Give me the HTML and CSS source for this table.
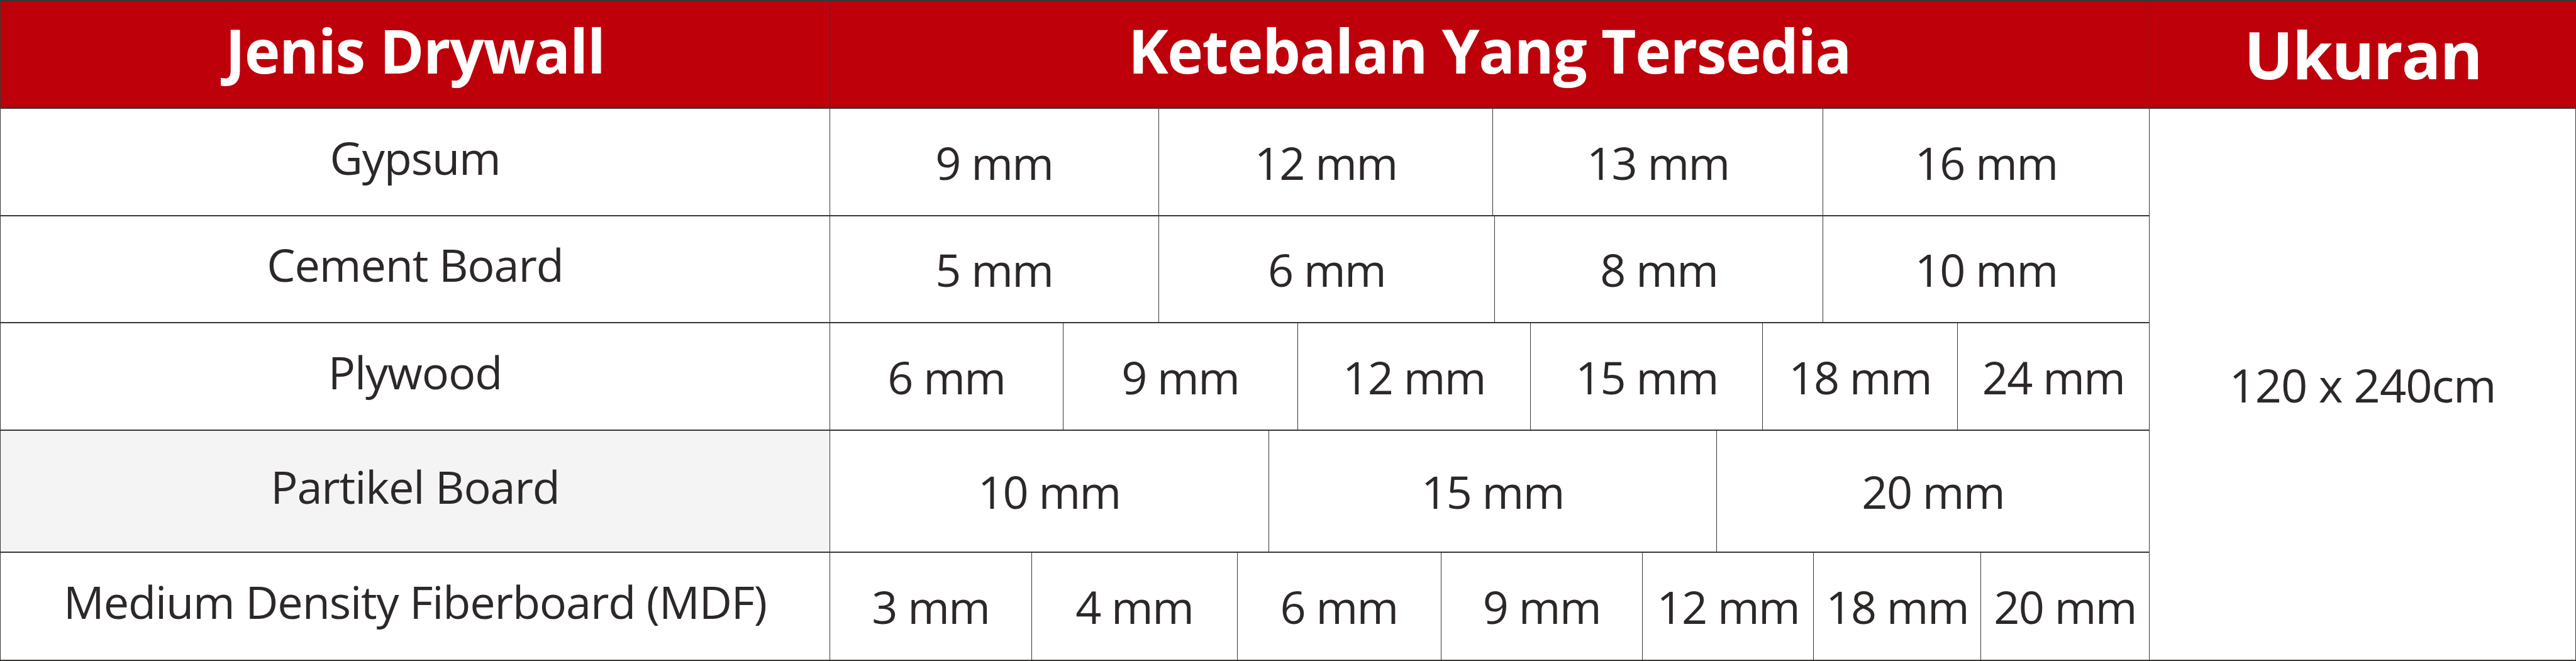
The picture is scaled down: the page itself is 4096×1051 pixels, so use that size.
FILE: index.html
```html
<!DOCTYPE html>
<html lang="id">
<head>
<meta charset="utf-8">
<title>Jenis Drywall</title>
<link rel="stylesheet" href="styles.css">
</head>
<body>
<div class="table">
  <div class="hcell h-jenis"><span>Jenis Drywall</span></div>
  <div class="hcell h-tebal"><span>Ketebalan Yang Tersedia</span></div>
  <div class="hcell h-ukuran"><span>Ukuran</span></div>

  <div class="label">Gypsum</div>
  <div class="opts r-gyp">
    <div class="opt">9 mm</div><div class="opt">12 mm</div><div class="opt">13 mm</div><div class="opt">16 mm</div>
  </div>
  <div class="size">120 x 240cm</div>

  <div class="label">Cement Board</div>
  <div class="opts r-cem">
    <div class="opt">5 mm</div><div class="opt">6 mm</div><div class="opt">8 mm</div><div class="opt">10 mm</div>
  </div>

  <div class="label">Plywood</div>
  <div class="opts r-ply">
    <div class="opt">6 mm</div><div class="opt">9 mm</div><div class="opt">12 mm</div><div class="opt">15 mm</div><div class="opt">18 mm</div><div class="opt">24 mm</div>
  </div>

  <div class="label label-grey">Partikel Board</div>
  <div class="opts r-par">
    <div class="opt">10 mm</div><div class="opt">15 mm</div><div class="opt">20 mm</div>
  </div>

  <div class="label">Medium Density Fiberboard (MDF)</div>
  <div class="opts r-mdf">
    <div class="opt">3 mm</div><div class="opt">4 mm</div><div class="opt">6 mm</div><div class="opt">9 mm</div><div class="opt">12 mm</div><div class="opt">18 mm</div><div class="opt">20 mm</div>
  </div>
</div>
</body>
</html>
```

FILE: styles.css
```css
* { box-sizing: border-box; }

html, body {
  margin: 0;
  padding: 0;
  background: #ffffff;
}

body {
  font-family: "Open Sans", "Noto Sans", sans-serif;
  color: #2d2828;
}

.table {
  display: grid;
  width: 4096px;
  grid-template-columns: 1319px 2098px 679px;
  grid-template-rows: 171px 171px 170px 171px 194px 172px;
  border-top: 2px solid #3a3535;
  border-left: 1px solid #3a3535;
}

.hcell {
  background: #be000b;
  color: #ffffff;
  font-weight: 700;
  display: flex;
  align-items: center;
  justify-content: center;
  border-right: 1px solid #3a3535;
  border-bottom: 3px solid #3a3535;
  letter-spacing: -1.4px;
}

.h-jenis, .h-tebal {
  font-size: 96px;
  padding-bottom: 14px;
}

.h-ukuran {
  font-size: 104px;
  letter-spacing: -2px;
  padding-bottom: 2px;
}

.label {
  grid-column: 1;
  display: flex;
  align-items: center;
  justify-content: center;
  font-size: 72px;
  letter-spacing: -1.1px;
  padding-bottom: 16px;
  border-right: 1px solid #3a3535;
  border-bottom: 2px solid #3a3535;
}

.label-grey {
  background: #f4f4f4;
}

.opts {
  grid-column: 2;
  display: grid;
  border-right: 1px solid #3a3535;
  border-bottom: 2px solid #3a3535;
}

.r-gyp { grid-template-columns: 523fr 532fr 525fr 518fr; }
.r-cem { grid-template-columns: 523fr 535fr 522fr 518fr; }
.r-ply { grid-template-columns: 371fr 373fr 371fr 369fr 310fr 304fr; }
.r-par { grid-template-columns: 698fr 713fr 687fr; }
.r-mdf { grid-template-columns: 321fr 327fr 324fr 321fr 272fr 266fr 267fr; }

.opt {
  display: flex;
  align-items: center;
  justify-content: center;
  font-size: 72px;
  letter-spacing: -1.5px;
  white-space: nowrap;
  border-right: 1px solid #3a3535;
}

.opt:last-child {
  border-right: none;
}

.size {
  grid-column: 3;
  grid-row: 2 / 7;
  display: flex;
  align-items: center;
  justify-content: center;
  font-size: 74px;
  letter-spacing: -1px;
  border-right: 2px solid #3a3535;
  border-bottom: 2px solid #3a3535;
}
```
